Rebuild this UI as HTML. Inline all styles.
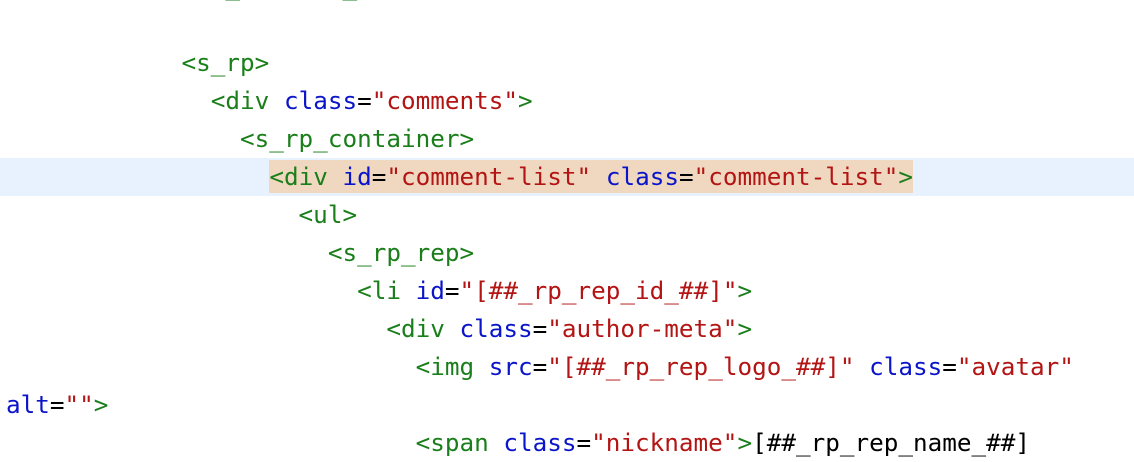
<!DOCTYPE html>
<html><head><meta charset="utf-8"><style>
html,body{margin:0;padding:0;background:#fff;width:1134px;height:454px;overflow:hidden}
.hl{position:absolute;left:0;top:158px;width:1134px;height:38px;background:#e8f2fe}
pre{position:absolute;left:6px;top:-32px;margin:0;font-family:"DejaVu Sans Mono","Liberation Mono",monospace;font-size:24.3px;line-height:38px;color:#000}
.t{color:#1a7f1a}.a{color:#0a14c8}.s{color:#b31414}
.m{background:#f0d8c0;padding:2px 0}
</style></head><body>
<div class="hl"></div>
<pre><span class="t">               _       _</span>

<span class="t">            &lt;s_rp&gt;</span>
<span class="t">              &lt;div</span> <span class="a">class</span>=<span class="s">"comments"</span><span class="t">&gt;</span>
<span class="t">                &lt;s_rp_container&gt;</span>
                  <span class="m"><span class="t">&lt;div</span> <span class="a">id</span>=<span class="s">"comment-list"</span> <span class="a">class</span>=<span class="s">"comment-list"</span><span class="t">&gt;</span></span>
<span class="t">                    &lt;ul&gt;</span>
<span class="t">                      &lt;s_rp_rep&gt;</span>
<span class="t">                        &lt;li</span> <span class="a">id</span>=<span class="s">"[##_rp_rep_id_##]"</span><span class="t">&gt;</span>
<span class="t">                          &lt;div</span> <span class="a">class</span>=<span class="s">"author-meta"</span><span class="t">&gt;</span>
<span class="t">                            &lt;img</span> <span class="a">src</span>=<span class="s">"[##_rp_rep_logo_##]"</span> <span class="a">class</span>=<span class="s">"avatar"</span>
<span class="a">alt</span>=<span class="s">""</span><span class="t">&gt;</span>
<span class="t">                            &lt;span</span> <span class="a">class</span>=<span class="s">"nickname"</span><span class="t">&gt;</span>[##_rp_rep_name_##]</pre>
</body></html>
